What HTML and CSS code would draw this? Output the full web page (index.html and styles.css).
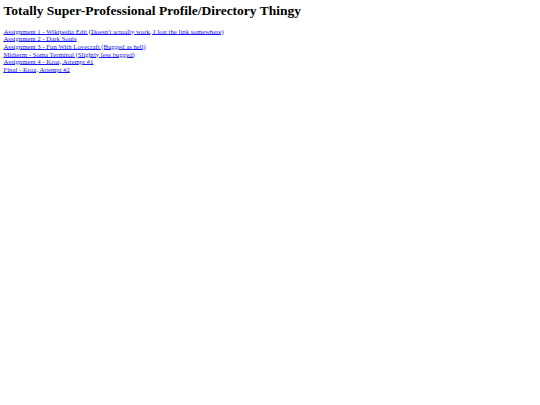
FILE: index.html
```html
<!DOCTYPE html>
<html>
<head>
<meta charset="utf-8">
<title>Profile</title>
<link rel="stylesheet" href="styles.css">
</head>
<body>
<h1 class="title">Totally Super-Professional Profile/Directory Thingy</h1>
<div class="links">
<a href="#">Assignment 1 - Wikipedia Edit (Doesn't actually work, I lost the link somewhere)</a><br>
<a href="#">Assignment 2 - Dark Souls</a><br>
<a href="#">Assignment 3 - Fun With Lovecraft (Bugged as hell)</a><br>
<a href="#">Midterm - Soma Terminal (Slightly less bugged)</a><br>
<a href="#">Assignment 4 - Kroz, Attempt #1</a><br>
<a href="#">Final - Kroz, Attempt #2</a>
</div>
</body>
</html>
```
FILE: styles.css
```css
html, body {
  background: #ffffff;
}
body {
  margin: 3.4px;
  font-family: "Liberation Serif", "Times New Roman", serif;
  font-size: 6.75px;
  color: #000000;
}
.title {
  font-size: 13.5px;
  line-height: 15.5px;
  font-weight: bold;
  margin: 0 0 9px 0;
}
.links {
  line-height: 7.6px;
}
.links a {
  color: #1a1aee;
  text-decoration: underline;
  text-decoration-thickness: 0.6px;
  text-underline-offset: 0.4px;
}
```
